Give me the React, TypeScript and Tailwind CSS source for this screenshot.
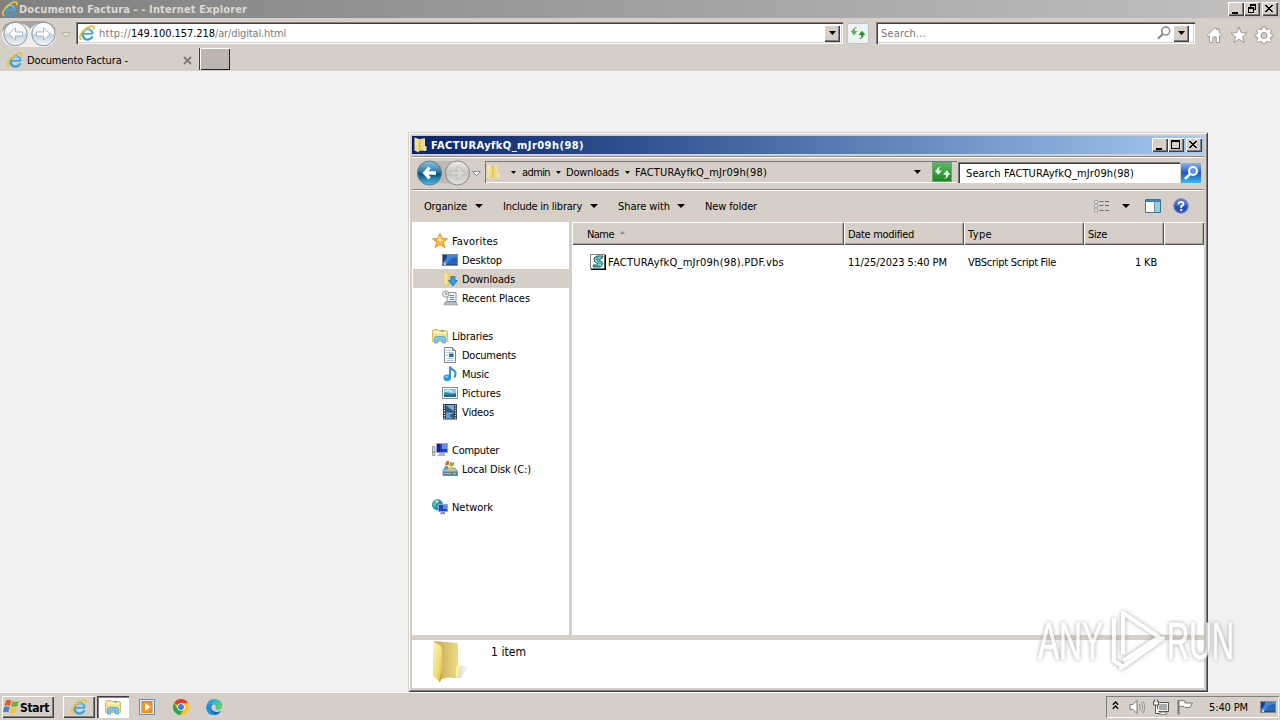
import { useLayoutEffect, useRef, useState } from "react";
import type { ReactNode } from "react";

/* A line of text whose letter spacing is tuned so that it fills `w` pixels. */
function T({ children, w, className = "" }: { children: string; w: number; className?: string }) {
  const ref = useRef<HTMLSpanElement>(null);
  const [gap, setGap] = useState(0);
  useLayoutEffect(() => {
    const el = ref.current;
    if (el) setGap((w - el.getBoundingClientRect().width) / children.length);
  }, [children, w]);
  return (
    <span ref={ref} className={"inline-block shrink-0 whitespace-pre pt-[2px] " + className} style={{ letterSpacing: gap }}>
      {children}
    </span>
  );
}

const raised = "shadow-[inset_1px_1px_#fff,inset_-1px_-1px_#404040,inset_-2px_-2px_#808080] bg-[#d5cfc7]";
const sunken = "shadow-[inset_1px_1px_#808080,inset_2px_2px_#404040,inset_-1px_-1px_#fff,inset_-2px_-2px_#d5cfc7]";

function Down({ className = "w-[9px] h-[5px]", fill = "#000" }: { className?: string; fill?: string }) {
  return (
    <svg viewBox="0 0 8 4" preserveAspectRatio="none" className={"shrink-0 " + className}>
      <path d="M0 0H8L4 4Z" fill={fill} />
    </svg>
  );
}

function IELogo({ size = 16 }: { size?: number }) {
  return (
    <svg width={size} height={size} viewBox="0 0 16 16" className="shrink-0">
      <path d="M4 8.8H14" stroke="#41a5e0" strokeWidth="1.8" />
      <path d="M13.4 11.4A5.2 5.2 0 1 1 13.7 8.4" fill="none" stroke="#3a9edb" strokeWidth="2.3" />
      <path d="M12.6 7.6A4.3 4.3 0 0 0 4.4 7.2" fill="none" stroke="#9bdcfa" strokeWidth="1" />
      <path d="M2.3 14.6C-.8 13.8 1.2 7.6 6.7 3.6C10.3 1 14.7.2 15 2C15.1 2.8 14.8 3.8 14.3 4.7" fill="none" stroke="#ecc12c" strokeWidth="1.7" />
    </svg>
  );
}

function FolderIcon({ size = 16 }: { size?: number }) {
  return (
    <svg width={size} height={size} viewBox="0 0 16 16" className="shrink-0">
      <defs>
        <linearGradient id="fa" x1="0" x2="1" y2="1">
          <stop offset="0" stopColor="#fbf1b0" />
          <stop offset="1" stopColor="#ecd069" />
        </linearGradient>
        <linearGradient id="fb" x1="0" x2="1">
          <stop offset="0" stopColor="#d2af4e" />
          <stop offset=".5" stopColor="#ecd783" />
          <stop offset="1" stopColor="#f0e197" />
        </linearGradient>
      </defs>
      <path d="M5 2.2L12 1.2V13.4L5 14Z" fill="url(#fb)" />
      <path d="M11.4 9.5L13.5 9V13.5L11 14Z" fill="#f8eb9c" />
      <path d="M1.5 .5L6 2V15.6L1.5 13.6Z" fill="url(#fa)" />
    </svg>
  );
}

function BigFolder() {
  return (
    <svg width="40" height="46" viewBox="0 0 40 46" className="shrink-0">
      <defs>
        <linearGradient id="ga" x1="0" x2="1" y2="1">
          <stop offset="0" stopColor="#fdf5b2" />
          <stop offset=".6" stopColor="#f2dc76" />
          <stop offset="1" stopColor="#e0ad45" />
        </linearGradient>
        <linearGradient id="gb" x1="0" x2="1">
          <stop offset="0" stopColor="#c8a550" />
          <stop offset=".5" stopColor="#d8c06c" />
          <stop offset="1" stopColor="#ecdb80" />
        </linearGradient>
        <linearGradient id="gc" x1="0" x2="1">
          <stop offset="0" stopColor="#a0a4ad" />
          <stop offset="1" stopColor="#fff" />
        </linearGradient>
      </defs>
      <path d="M20 38L30 25L38 27L30 38Z" fill="url(#gc)" opacity=".7" />
      <path d="M3 1L26 3Q27 3 27 5V36L10 39Z" fill="url(#gb)" />
      <path d="M25 27L28 23V35L25 38Z" fill="#fdf3a0" />
      <path d="M2 1L10 6Q11 8 11 11V35L9 42L2 36Z" fill="url(#ga)" />
      <path d="M11 31V38L9 42L8 41Z" fill="#cf8f43" opacity=".7" />
    </svg>
  );
}

function LibIcon({ size = 16 }: { size?: number }) {
  return (
    <svg width={size} height={size} viewBox="0 0 16 16" className="shrink-0">
      <path d="M.5 3.5V2.5L1.5 1.5H6L7 2.5H14.5L15.5 4V13.5H.5Z" fill="#f1df8f" stroke="#d3bb6b" />
      <path d="M2 4.5H14" stroke="#fff6ba" strokeWidth="2" />
      <path d="M9 3H12" stroke="#57b574" strokeWidth="1.4" />
      <path d="M2.5 15V10.5Q2.5 8.5 4.5 8.5H11.5Q13.5 8.5 13.5 10.5V15H10.5V12H5.5V15Z" fill="#7cc9f3" stroke="#4b9fd3" strokeWidth=".8" />
    </svg>
  );
}

function StarIcon() {
  return (
    <svg width="16" height="16" viewBox="0 0 16 16" className="shrink-0">
      <path d="M8 .5L10.1 5.4L15.5 5.8L11.4 9.2L13 14.6L8 11.6L3 14.6L4.6 9.2L.5 5.8L5.9 5.4Z" fill="#f9b637" stroke="#e08f22" strokeWidth=".9" />
      <path d="M8 3L9.5 6.5L12 7L8 9L5 7Z" fill="#ffe296" />
    </svg>
  );
}

function DesktopIcon() {
  return (
    <svg width="16" height="16" viewBox="0 0 16 16" className="shrink-0">
      <rect x=".5" y="2.5" width="15" height="11" fill="#2565bd" stroke="#85888c" />
      <path d="M1 3H15V5Q8 5 5 12H1Z" fill="#4387dc" />
      <path d="M1 3H5Q5 8 1 10Z" fill="#173f91" />
      <path d="M1 12.5H15" stroke="#274b84" />
      <path d="M2 11.2H4M2 12.5H4" stroke="#bfe4fb" />
    </svg>
  );
}

function DownloadsIcon() {
  return (
    <svg width="16" height="16" viewBox="0 0 16 16" className="shrink-0">
      <path d="M5 2L12 1.5V13L5 14Z" fill="#e8d181" />
      <path d="M1.5 1L6 2.5V15L1.5 13Z" fill="#f7e48e" stroke="#d8b951" strokeWidth=".5" />
      <path d="M8.8 5.5H13V9.5H15.5L11 15L6.3 9.5H8.8Z" fill="#369adb" stroke="#2376ad" strokeWidth=".8" />
    </svg>
  );
}

function RecentIcon() {
  return (
    <svg width="16" height="16" viewBox="0 0 16 16" className="shrink-0">
      <path d="M5 2.5H14V11.5H5Z" fill="#eef3f9" stroke="#8b96a3" />
      <path d="M7.5 5.5H12M7.5 7.5H12M8 9.5H12" stroke="#648bbd" />
      <path d="M3 12H14L15.5 14.8H2Z" fill="#bfc5cb" stroke="#848b92" strokeWidth=".7" />
      <circle cx="3.8" cy="4" r="3.2" fill="#f5f5f5" stroke="#9b9b9b" />
      <path d="M3.8 2V4.3H5.5" fill="none" stroke="#555" strokeWidth=".8" />
    </svg>
  );
}

function DocIcon() {
  return (
    <svg width="16" height="16" viewBox="0 0 16 16" className="shrink-0">
      <path d="M2.5 .5H10.5L13.5 3.5V15.5H2.5Z" fill="#fbfcfd" stroke="#7b8794" />
      <path d="M10.5 .5V3.5H13.5" fill="#c6d3df" stroke="#7b8794" />
      <path d="M4.5 3.5H8M4.5 5.5H11.5M4.5 11.5H11.5M4.5 13.5H11.5M4 8.5H6" stroke="#9fb0c0" strokeWidth=".8" />
      <rect x="7" y="6.5" width="4.5" height="3.5" fill="#2369b5" />
    </svg>
  );
}

function MusicIcon() {
  return (
    <svg width="16" height="16" viewBox="0 0 16 16" className="shrink-0">
      <path d="M8 11V.5Q9 3.5 12 4.5Q15 6.5 12.3 11.5" fill="none" stroke="#358dcf" strokeWidth="1.9" />
      <ellipse cx="5.2" cy="11.8" rx="3.8" ry="3.4" fill="#3195dd" />
      <ellipse cx="4.5" cy="10.8" rx="1.7" ry="1" fill="#84cbf3" />
    </svg>
  );
}

function PicIcon() {
  return (
    <svg width="16" height="16" viewBox="0 0 16 16" className="shrink-0">
      <rect x=".5" y="2.5" width="15" height="11" fill="#fff" stroke="#849096" />
      <rect x="2" y="4" width="12" height="8" fill="#82cbec" />
      <path d="M2 8Q5 6 9 9L14 8V12H2Z" fill="#378a8d" />
      <path d="M2 10L14 9V12H2Z" fill="#21639a" />
      <path d="M3 6.5Q6 4.5 10 6.5" stroke="#fff" fill="none" />
    </svg>
  );
}

function VideoIcon() {
  return (
    <svg width="16" height="16" viewBox="0 0 16 16" className="shrink-0">
      <rect x="1" y="0" width="14" height="15.5" fill="#293641" />
      <rect x="4" y="1" width="8" height="6.2" fill="#71afd8" />
      <rect x="4" y="8.3" width="8" height="6.2" fill="#62a3d0" />
      <path d="M4 1L8 4.5L12 7.2H4ZM12 8.3L7 12L12 14.5Z" fill="#37587e" />
      <path d="M2.5 1V15M13.5 1V15" stroke="#e1e7ea" strokeWidth="1.4" strokeDasharray="1.3 1.2" />
    </svg>
  );
}

function ComputerIcon() {
  return (
    <svg width="16" height="16" viewBox="0 0 16 16" className="shrink-0">
      <path d="M.5 4.5H3V13.5H.5Z" fill="#d9dcd6" stroke="#9a9eaa" />
      <path d="M1 10H3" stroke="#39b746" />
      <path d="M4.5 1.5H15.5V10.5H4.5Z" fill="#263bc8" stroke="#9ca7be" />
      <path d="M10 2H15V7H10Z" fill="#6791ee" />
      <path d="M5 2H8V10H5Z" fill="#1421a2" />
      <path d="M8 11H12L13 13.5H6Z" fill="#b8bdc9" stroke="#8790a0" strokeWidth=".6" />
    </svg>
  );
}

function DiskIcon() {
  return (
    <svg width="16" height="16" viewBox="0 0 16 16" className="shrink-0">
      <path d="M1 9L3 7H13L15.5 10V14.5H1Z" fill="#b7c2c5" stroke="#697d86" strokeWidth=".7" />
      <path d="M1 10.5H15.5V14.5H1Z" fill="#5b8392" />
      <path d="M2 12.5H9" stroke="#a1c1ca" />
      <path d="M11 12.5H14" stroke="#85df5f" strokeWidth="1.4" />
      <path d="M4 .5Q6 -.5 7.5 .5L6.5 4.5Q5 3.5 3 4.5Z" fill="#ea592d" />
      <path d="M8.3 1Q10 2 12.5 1L11.3 5Q9 6 7.3 4.8Z" fill="#7ab63b" />
      <path d="M2.8 5.3Q4.5 4.5 6.2 5.3L5.3 9Q3.5 8.5 2 9.2Z" fill="#3d9ddb" />
      <path d="M7 5.8Q9 6.8 11 6L10 9.5Q8 10.3 6.2 9.3Z" fill="#f5c22e" />
    </svg>
  );
}

function NetworkIcon() {
  return (
    <svg width="16" height="16" viewBox="0 0 16 16" className="shrink-0">
      <circle cx="5.5" cy="5.8" r="5.2" fill="#1c9bc0" stroke="#257aa0" strokeWidth=".6" />
      <path d="M1 4Q3 .5 6 1.2L5 4L3 8L1 7Z" fill="#5fc878" />
      <path d="M3 2Q5 1 7 2L5 4Z" fill="#d4f5f8" />
      <path d="M6.5 5.5H15.5V12.5H6.5Z" fill="#2043c6" stroke="#93a5c4" />
      <path d="M11 6H15V10H11Z" fill="#598eee" />
      <path d="M9 13H13V15.2H8Z" fill="#8695a9" />
    </svg>
  );
}

function ScriptIcon() {
  return (
    <svg width="16" height="16" viewBox="0 0 16 16" className="shrink-0">
      <path d="M0 0H15V15H0Z" fill="#fff" />
      <path d="M.5 15V.5H15" fill="none" stroke="#808080" />
      <path d="M1 15.2H15.2V1" fill="none" stroke="#000" strokeWidth="1.6" />
      <path d="M4 4L7 2H13L12 4.3H10.5L9.5 6L13 9.5L10.5 13H3.5L3 11H6.5L8 9.8L4.5 7.5Z" fill="#8ce0da" stroke="#0b3b42" strokeWidth=".9" />
      <path d="M6 4H9M6 5.5H8.5M7 7.2H10.5M8.5 9H11.5M5 12H10" stroke="#087b83" strokeWidth=".9" />
    </svg>
  );
}

function Refresh({ size, a, b }: { size: number; a: string; b: string }) {
  return (
    <svg width={size} height={size} viewBox="0 0 16 16" className="shrink-0">
      <path d="M7.5 2L4.8 3.4V6H7.5L4 10.2L.6 6H2.5Q2.5 2.3 7.5 2Z" fill={a} />
      <path d="M8.5 14L11.2 12.6V10H8.5L12 5.8L15.4 10H13.5Q13.5 13.7 8.5 14Z" fill={b} />
    </svg>
  );
}

function IENav() {
  return (
    <svg width="73" height="28" viewBox="0 0 73 28" className="mt-[2px] shrink-0">
      <defs>
        <linearGradient id="na" x2="0" y2="1">
          <stop offset="0" stopColor="#fff" />
          <stop offset=".45" stopColor="#f0f3f6" />
          <stop offset=".55" stopColor="#c4d2de" />
          <stop offset="1" stopColor="#f5fbff" />
        </linearGradient>
      </defs>
      <path d="M13 1Q29 5 43 1Q55 4 55 14Q55 26 43 27H15Q1 26 1 14Q1 3 13 1Z" fill="#f1efec" />
      <path d="M13 1Q29 1 43 1Q55 4 55 12Q50 3 43 4Q35 2 29 9Q23 2 15 4Q8 3 1 12Q1 3 13 1Z" fill="#a7a4a0" />
      <circle cx="14.5" cy="14" r="11.7" fill="url(#na)" stroke="#8797a4" />
      <circle cx="42.5" cy="14" r="11.7" fill="url(#na)" stroke="#8797a4" />
      <path d="M14.5 8L8 14L14.5 20V16H21.5V12H14.5ZM42.5 8L49 14L42.5 20V16H35.5V12H42.5Z" fill="#fff" stroke="#aab7c2" />
      <path d="M60.5 12.5H69.5L65 17Z" fill="#e3dfda" stroke="#b5b1ac" />
    </svg>
  );
}

function ExpNav() {
  return (
    <svg width="73" height="28" viewBox="0 0 73 28" className="mt-px shrink-0">
      <defs>
        <linearGradient id="ea" x2="0" y2="1">
          <stop offset="0" stopColor="#8dc5e0" />
          <stop offset=".45" stopColor="#317ba5" />
          <stop offset=".55" stopColor="#0b527f" />
          <stop offset="1" stopColor="#43c4ee" />
        </linearGradient>
        <linearGradient id="eb" x2="0" y2="1">
          <stop offset="0" stopColor="#eeeeec" />
          <stop offset=".5" stopColor="#c5c4c1" />
          <stop offset="1" stopColor="#e5e4e1" />
        </linearGradient>
      </defs>
      <path d="M17 2H45Q57 4 57 14Q57 25 45 26Q31 22 17 26Q5 24 5 14Q5 4 17 2Z" fill="#bcb8b2" />
      <circle cx="17.5" cy="14" r="12" fill="url(#ea)" stroke="#5b7c90" />
      <circle cx="45.5" cy="14" r="12" fill="url(#eb)" stroke="#8a8a89" />
      <path d="M16.5 7.5L10.5 14L16.5 20.5L18.8 18.2L16.5 15.7H24V12.3H16.5L18.8 9.8Z" fill="#fff" />
      <path d="M46 7.5L52.5 14L46 20.5L43.7 18.2L46 15.7H38.5V12.3H46L43.7 9.8Z" fill="#d9d8d6" stroke="#b2b1af" strokeWidth=".7" />
      <path d="M60.5 12.5H68.5L64.5 16.5Z" fill="#fff" stroke="#8c8984" />
    </svg>
  );
}

function CapBtn({ kind }: { kind: "min" | "max" | "restore" | "close" }) {
  return (
    <div className={"flex h-[14px] w-4 shrink-0 items-center justify-center " + raised}>
      <svg width="14" height="12" viewBox="0 0 14 12" shapeRendering="crispEdges">
        {kind === "min" && <path d="M3 9H9V11H3Z" />}
        {kind === "max" && <path d="M2 1H11V10H2ZM3 3V9H10V3Z" fillRule="evenodd" />}
        {kind === "restore" && <path d="M5 1H11V7H9V6H10V3H6V4H5ZM3 4H9V10H3ZM4 6V9H8V6Z" fillRule="evenodd" />}
        {kind === "close" && <path d="M2 2H4V3H5V4H7V3H8V2H10V3H9V4H8V5H7V6H8V7H9V8H10V9H8V8H7V7H5V8H4V9H2V8H3V7H4V6H5V5H4V4H3V3H2Z" />}
      </svg>
    </div>
  );
}

function NavItem({ icon, label, w, root = false, active = false }: { icon: ReactNode; label: string; w: number; root?: boolean; active?: boolean }) {
  return (
    <div className={"flex h-[19px] shrink-0 items-center " + (root ? "gap-1 pl-[19px]" : "gap-1 pl-[29px]") + (active ? " bg-[#d5cfc7]" : "")}>
      {icon}
      <T w={w}>{label}</T>
    </div>
  );
}

function Col({ children, className }: { children?: ReactNode; className: string }) {
  return (
    <div className={"flex h-[23px] shrink-0 items-center bg-[#d5cfc7] shadow-[inset_1px_1px_#fff,inset_-1px_-1px_#55524f,inset_-2px_-2px_#aaa59f] " + className}>
      {children}
    </div>
  );
}

function Watermark() {
  return (
    <svg
      width="210"
      height="80"
      viewBox="0 0 210 80"
      className="absolute left-[1030px] top-[600px] opacity-75 drop-shadow-[0_0_2px_#888] [font-family:'Liberation_Sans',sans-serif] text-[52px]"
      fill="#fff"
      stroke="#fff"
    >
      <text x="8" y="59" textLength="65" lengthAdjust="spacingAndGlyphs" strokeWidth=".8">ANY</text>
      <path d="M84 18V61L92 66" fill="none" strokeWidth="4" />
      <path d="M93 54V13L129 37L93 61" fill="none" strokeWidth="4" strokeLinejoin="round" />
      <path d="M91 68L133 38" fill="none" strokeWidth="4" strokeLinecap="round" />
      <text x="137" y="59" textLength="67" lengthAdjust="spacingAndGlyphs" strokeWidth=".8">RUN</text>
    </svg>
  );
}

function Explorer() {
  return (
    <div className="absolute left-[408px] top-[132px] flex h-[560px] w-[800px] flex-col bg-[#d5cfc7] p-1 shadow-[inset_1px_1px_#d5cfc7,inset_-1px_-1px_#404040,inset_2px_2px_#fff,inset_-2px_-2px_#808080]">
      <div className="flex h-[18px] shrink-0 items-center bg-gradient-to-r from-[#0a246a] to-[#a6caf0] pl-px pr-[2px]">
        <FolderIcon />
        <T w={153} className="ml-[2px] font-bold text-white">FACTURAyfkQ_mJr09h(98)</T>
        <div className="ml-auto flex">
          <CapBtn kind="min" />
          <CapBtn kind="max" />
          <div className="w-[2px]" />
          <CapBtn kind="close" />
        </div>
      </div>
      <div className="mt-[2px] flex h-[34px] shrink-0 items-center border-b border-[#8c8883] shadow-[inset_0_1px_#8c8883,inset_0_2px_#fff,0_1px_#fff]">
        <ExpNav />
        <div className="mt-[-1px] flex h-[22px] w-[472px] shrink-0 items-center pl-px shadow-[inset_1px_1px_#777,inset_0_-1px_#fff]">
          <FolderIcon />
          <Down className="ml-[9px] h-[3px] w-[5px]" />
          <T w={28} className="ml-[6px]">admin</T>
          <Down className="ml-[6px] h-[3px] w-[5px]" />
          <T w={53} className="ml-[5px]">Downloads</T>
          <Down className="ml-[6px] h-[3px] w-[5px]" />
          <T w={132} className="ml-[5px]">FACTURAyfkQ_mJr09h(98)</T>
          <Down className="ml-auto mr-9 h-[4px] w-[7px]" />
        </div>
        <div className="ml-[-25px] mt-[-1px] flex h-5 w-5 shrink-0 items-center justify-center border border-[#6aa870] bg-gradient-to-b from-[#58b763] to-[#168824]">
          <Refresh size={17} a="#e4ffe0" b="#e4ffe0" />
        </div>
        <div className="ml-[6px] flex h-[21px] w-[222px] shrink-0 items-center bg-white pl-2 shadow-[inset_1px_1px_#777,inset_2px_2px_#404040]">
          <T w={168}>Search FACTURAyfkQ_mJr09h(98)</T>
        </div>
        <div className="ml-[1px] flex h-5 w-5 shrink-0 items-center justify-center bg-gradient-to-b from-[#8fb2ea] via-[#2456c4] to-[#34bdf2]">
          <svg width="18" height="18" viewBox="0 0 18 18">
            <circle cx="11" cy="7" r="4" fill="#5b96e2" stroke="#fff" strokeWidth="2" />
            <path d="M8 10L3 15" stroke="#fff" strokeWidth="2.5" />
          </svg>
        </div>
      </div>
      <div className="flex h-8 shrink-0 items-center pl-3">
        <T w={43}>Organize</T>
        <Down className="ml-2 h-[4px] w-[8px]" />
        <T w={79} className="ml-5">Include in library</T>
        <Down className="ml-2 h-[4px] w-[8px]" />
        <T w={52} className="ml-5">Share with</T>
        <Down className="ml-[7px] h-[4px] w-[8px]" />
        <T w={52} className="ml-5">New folder</T>
        <div className="ml-auto flex items-center pr-[15px]">
          <svg width="16" height="14" viewBox="0 0 16 14">
            <path d="M.5 1.5H3.5V4H.5ZM.5 5.8H3.5V8.3H.5ZM.5 10H3.5V12.5H.5Z" fill="#fff" stroke="#8c8c96" strokeWidth=".8" />
            <path d="M5.5 2.5H9.5M11 2.5H15M5.5 6.5H9.5M11 6.5H15M5.5 11.5H9.5M11 11.5H15" stroke="#696979" />
          </svg>
          <Down className="ml-3 h-[4px] w-[8px]" />
          <svg width="16" height="14" viewBox="0 0 16 14" className="ml-[15px]">
            <path d="M.5 .5H15.5V13.5H.5Z" fill="#fff" stroke="#46718d" />
            <path d="M1 2H15" stroke="#3c87ae" strokeWidth="2" />
            <path d="M10 3H15V13H10Z" fill="#8bd4e7" />
            <path d="M9.5 3V13" stroke="#6c98aa" />
          </svg>
          <svg width="16" height="16" viewBox="0 0 16 16" className="ml-3">
            <circle cx="8" cy="8" r="7.3" fill="#2b50b3" stroke="#8297cb" strokeWidth="1.2" />
            <path d="M2 7A6 6 0 0 1 14 7Q8 9 2 7Z" fill="#6189da" opacity=".7" />
            <path d="M5.7 6.2Q5.6 3.8 8 3.8T10.4 6Q10.4 7.2 8.2 8.3V10" fill="none" stroke="#fff" strokeWidth="1.8" />
            <path d="M7.2 11H9.2V13H7.2Z" fill="#fff" />
          </svg>
        </div>
      </div>
      <div className="flex h-[413px] shrink-0 bg-white">
        <div className="flex w-[157px] shrink-0 flex-col pl-px pt-[9px]">
          <NavItem root icon={<StarIcon />} label="Favorites" w={46} />
          <NavItem icon={<DesktopIcon />} label="Desktop" w={40} />
          <NavItem active icon={<DownloadsIcon />} label="Downloads" w={53} />
          <NavItem icon={<RecentIcon />} label="Recent Places" w={68} />
          <div className="h-[19px]" />
          <NavItem root icon={<LibIcon />} label="Libraries" w={41} />
          <NavItem icon={<DocIcon />} label="Documents" w={54} />
          <NavItem icon={<MusicIcon />} label="Music" w={27} />
          <NavItem icon={<PicIcon />} label="Pictures" w={39} />
          <NavItem icon={<VideoIcon />} label="Videos" w={32} />
          <div className="h-[19px]" />
          <NavItem root icon={<ComputerIcon />} label="Computer" w={47} />
          <NavItem icon={<DiskIcon />} label="Local Disk (C:)" w={69} />
          <div className="h-[19px]" />
          <NavItem root icon={<NetworkIcon />} label="Network" w={41} />
        </div>
        <div className="w-[3px] shrink-0 bg-[#d5cfc7]" />
        <div className="flex flex-1 flex-col">
          <div className="flex">
            <Col className="w-[272px] pl-[15px]">
              <T w={27}>Name</T>
              <svg width="5" height="3" viewBox="0 0 5 3" className="mb-[3px] ml-[6px]">
                <path d="M0 3H5L2.5 0Z" fill="#8d8984" />
              </svg>
            </Col>
            <Col className="w-[120px] pl-1"><T w={66}>Date modified</T></Col>
            <Col className="w-[120px] pl-1"><T w={24}>Type</T></Col>
            <Col className="w-[80px] pl-1"><T w={19}>Size</T></Col>
            <Col className="w-[40px]" />
          </div>
          <div className="mt-2 flex h-[17px] items-center pl-[18px]">
            <ScriptIcon />
            <div className="ml-[2px] flex w-[240px]"><T w={176}>FACTURAyfkQ_mJr09h(98).PDF.vbs</T></div>
            <div className="flex w-[120px]"><T w={99}>11/25/2023 5:40 PM</T></div>
            <div className="flex w-[120px]"><T w={88}>VBScript Script File</T></div>
            <div className="flex w-[69px] justify-end"><T w={22}>1 KB</T></div>
          </div>
        </div>
      </div>
      <div className="h-[5px] shrink-0 bg-[#d5cfc7]" />
      <div className="flex h-12 shrink-0 bg-white pl-[19px]">
        <BigFolder />
        <T w={35} className="ml-5 mt-[3px] text-[12px]">1 item</T>
      </div>
    </div>
  );
}

function StartFlag() {
  return (
    <svg width="17" height="16" viewBox="0 0 17 16" className="shrink-0">
      <path d="M3 1.5Q5.5 0 8.3 1.5L7 7Q4.5 5.7 1.5 7Z" fill="#e8572b" />
      <path d="M9.2 1.9Q12 3.6 16 2L14.4 7.3Q11 8.7 8 7.3Z" fill="#74b43c" />
      <path d="M1.2 8Q4 6.8 6.7 8L5.3 13.3Q3 12 -.3 13.5Z" fill="#3b86d0" />
      <path d="M7.7 8.3Q10.5 9.7 14 8.4L12.5 13.6Q9.5 15.2 6.3 13.7Z" fill="#f5c432" />
    </svg>
  );
}

function Taskbar() {
  return (
    <div className="flex h-[28px] shrink-0 items-center border-t border-white bg-[#d5cfc7] pt-px">
      <div className={"ml-[2px] flex h-[22px] w-[52px] items-center pl-px " + raised}>
        <StartFlag />
        <T w={29} className="font-bold text-[12px]">Start</T>
      </div>
      <div className={"ml-[9px] flex h-[22px] w-8 items-center justify-center " + raised}><IELogo /></div>
      <div className="ml-[2px] flex h-[22px] w-8 items-center justify-center bg-white shadow-[inset_1px_1px_#404040,inset_2px_2px_#808080,inset_-1px_-1px_#fff]"><LibIcon /></div>
      <svg width="16" height="16" viewBox="0 0 16 16" className="ml-[10px]">
        <rect x=".5" y=".5" width="15" height="15" fill="#d9ebf8" stroke="#5c94c1" />
        <rect x="2.5" y="2" width="11" height="12" fill="#ee8b20" />
        <circle cx="8" cy="8" r="4.8" fill="#f49a28" />
        <path d="M6 4L11.5 8L6 12Z" fill="#fff" />
      </svg>
      <svg width="16" height="16" viewBox="0 0 16 16" className="ml-[18px]">
        <circle cx="8" cy="8" r="8" fill="#f5c51e" />
        <path d="M8 8L1.1 4A8 8 0 0 1 15 4.2H8Z" fill="#e43b2f" />
        <path d="M1.1 4A8 8 0 0 0 7.3 16L11 9.8L8 11.5L4.8 9.8Z" fill="#35a34d" />
        <circle cx="8" cy="8" r="3.8" fill="#fff" />
        <circle cx="8" cy="8" r="2.9" fill="#3b7de8" />
      </svg>
      <svg width="17" height="16" viewBox="0 0 17 16" className="ml-[17px]">
        <defs>
          <linearGradient id="eg" x2="1" y2=".4">
            <stop offset="0" stopColor="#2493dc" />
            <stop offset=".55" stopColor="#32b9cf" />
            <stop offset="1" stopColor="#65d35c" />
          </linearGradient>
        </defs>
        <path d="M.5 7Q1.5 0 8.5 0Q16 .5 16.5 7Q16 11 11.5 11Q8.8 10.7 9.8 9Q10.5 6.2 7.5 5.2Q3 4.5 .5 7Z" fill="url(#eg)" />
        <path d="M.5 7Q3 4 7 5.2Q3.8 8 6.5 11.5Q9.5 14.2 15 12Q12.5 16.2 8 16Q0 15 .5 7Z" fill="#1767b5" />
        <path d="M.5 7Q3 4 7 5.2Q3.5 7.5 5 11Q6 14 9.5 16Q0 17 .5 7Z" fill="#278dd5" />
      </svg>
      <div className="ml-auto mr-[1px] flex h-[22px] w-[173px] items-center pl-[6px] shadow-[inset_1px_1px_#808080,inset_-1px_-1px_#fff]">
        <svg width="7" height="9" viewBox="0 0 7 9" className="mb-[3px]">
          <path d="M.8 3.7L3.5 1L6.2 3.7M.8 7.7L3.5 5L6.2 7.7" fill="none" stroke="#000" strokeWidth="1.3" />
        </svg>
        <svg width="17" height="16" viewBox="0 0 17 16" className="ml-[10px]">
          <path d="M1 5.5H4L8 1.5V14.5L4 10.5H1Z" fill="#fff" stroke="#777" />
          <path d="M10.3 5Q12 8 10.3 11M12.3 3Q15.3 8 12.3 13M14 2Q17.7 8 14 14" fill="none" stroke="#999" />
        </svg>
        <svg width="16" height="16" viewBox="0 0 16 16" className="ml-[7px]">
          <path d="M4.5 3.5H15.5V12.5H4.5Z" fill="#eee" stroke="#555" />
          <path d="M6 5H14V11H6Z" fill="#aaa" />
          <path d="M8 13H12V14H14V15.5H6V14H8Z" fill="#fff" stroke="#666" strokeWidth=".7" />
          <path d="M1.5 .5V2.5H.5V6H2.5V14.5H6M4.5 .5V2.5H5.5V6H2.5" fill="#fff" stroke="#555" />
        </svg>
        <svg width="16" height="16" viewBox="0 0 16 16" className="ml-2">
          <path d="M1.5 1V15.5" stroke="#777" strokeWidth="2" />
          <path d="M2 2Q5 .5 8 2V4H15.5L13 8.5H8L7 7.5Q4.5 6.5 2 8Z" fill="#fff" stroke="#777" />
        </svg>
        <T w={39} className="ml-4">5:40 PM</T>
        <div className="ml-3"><DesktopIcon /></div>
      </div>
    </div>
  );
}

export default function App() {
  return (
    <div className="relative flex h-[720px] w-[1280px] select-none flex-col overflow-hidden bg-[#f2f2f2] text-[11px] leading-[14px] text-black [font-family:Tahoma,'DejaVu_Sans_Condensed','DejaVu_Sans',sans-serif]">
      <div className="flex h-[18px] shrink-0 items-center bg-gradient-to-r from-[#808080] to-[#c2c1c0] pl-[2px] pr-[2px]">
        <IELogo />
        <T w={228} className="ml-px font-bold text-[#dcd8d2]">Documento Factura - - Internet Explorer</T>
        <div className="ml-auto flex">
          <CapBtn kind="min" />
          <CapBtn kind="restore" />
          <div className="w-[2px]" />
          <CapBtn kind="close" />
        </div>
      </div>
      <div className="flex h-[30px] shrink-0 items-center bg-[#d5cfc7] pl-px">
        <IENav />
        <div className={"ml-[2px] flex h-[22px] w-[767px] shrink-0 items-center bg-white pl-[3px] pr-[3px] " + sunken}>
          <IELogo />
          <div className="ml-1 flex text-[#7b7b7b]">
            <T w={32}>http://</T>
            <T w={84} className="text-black">149.100.157.218</T>
            <T w={71}>/ar/digital.html</T>
          </div>
          <div className={"ml-auto flex h-[17px] w-4 items-center justify-center " + raised}><Down className="h-[4px] w-[7px]" /></div>
        </div>
        <div className="ml-1 flex h-[21px] w-[22px] shrink-0 items-center justify-center rounded-[2px] border border-[#b9c4cb] bg-[#eef2f3]">
          <Refresh size={16} a="#55ad58" b="#238d29" />
        </div>
        <div className={"ml-[7px] flex h-[22px] w-[319px] shrink-0 items-center bg-white pl-[5px] pr-[6px] text-[#777] " + sunken}>
          <T w={45}>Search...</T>
          <svg width="14" height="14" viewBox="0 0 14 14" className="ml-auto mr-[2px]">
            <circle cx="8.7" cy="5" r="4" fill="#fff" stroke="#858585" strokeWidth="1.5" />
            <path d="M5.8 8L1 12.8" stroke="#858585" strokeWidth="2" />
          </svg>
          <div className={"flex h-[17px] w-4 items-center justify-center " + raised}><Down className="h-[4px] w-[7px]" /></div>
        </div>
        <svg width="68" height="18" viewBox="0 0 68 18" className="ml-[11px] mt-[3px] shrink-0">
          <g fill="#fff" stroke="#9b9793" strokeWidth="1">
            <path d="M1 9.5L8.5 1.8L11 4.2V2.5H13V6.2L16 9.5L14.5 10.5L13.5 9.7V16.5H10.2V11H6.8V16.5H3.5V9.7L2.3 10.7Z" />
            <path d="M33 1L35.2 6.6L41 7L36.6 10.8L38 16.5L33 13.3L28 16.5L29.4 10.8L25 7L30.8 6.6Z" />
            <path d="M56.4 1H59.6L60 3.2L61.3 3.8L63.2 2.5L65.5 4.8L64.2 6.7L64.8 8L67 8.4V10.6L64.8 11L64.2 12.3L65.5 14.2L63.2 16.5L61.3 15.2L60 15.8L59.6 17.8H56.4L56 15.8L54.7 15.2L52.8 16.5L50.5 14.2L51.8 12.3L51.2 11L49 10.6V8.4L51.2 8L51.8 6.7L50.5 4.8L52.8 2.5L54.7 3.8L56 3.2Z" />
            <circle cx="58" cy="9.5" r="3" fill="#d5cfc7" />
          </g>
        </svg>
      </div>
      <div className="flex h-[23px] shrink-0 bg-[#d5cfc7]">
        <div className="flex w-[199px] items-center pl-[7px]">
          <IELogo />
          <T w={101} className="ml-1">Documento Factura -</T>
          <svg width="9" height="9" viewBox="0 0 9 9" className="ml-auto mr-[7px] mt-[2px]">
            <path d="M1 1L8 8M8 1L1 8" stroke="#807b76" strokeWidth="1.8" />
          </svg>
        </div>
        <div className="h-[22px] w-[31px] bg-[#bdb6b0] shadow-[inset_1px_0_#404040,inset_2px_1px_#fff,inset_-1px_-1px_#222]" />
      </div>
      <div className="flex-1" />
      <Taskbar />
      <Explorer />
      <Watermark />
    </div>
  );
}
